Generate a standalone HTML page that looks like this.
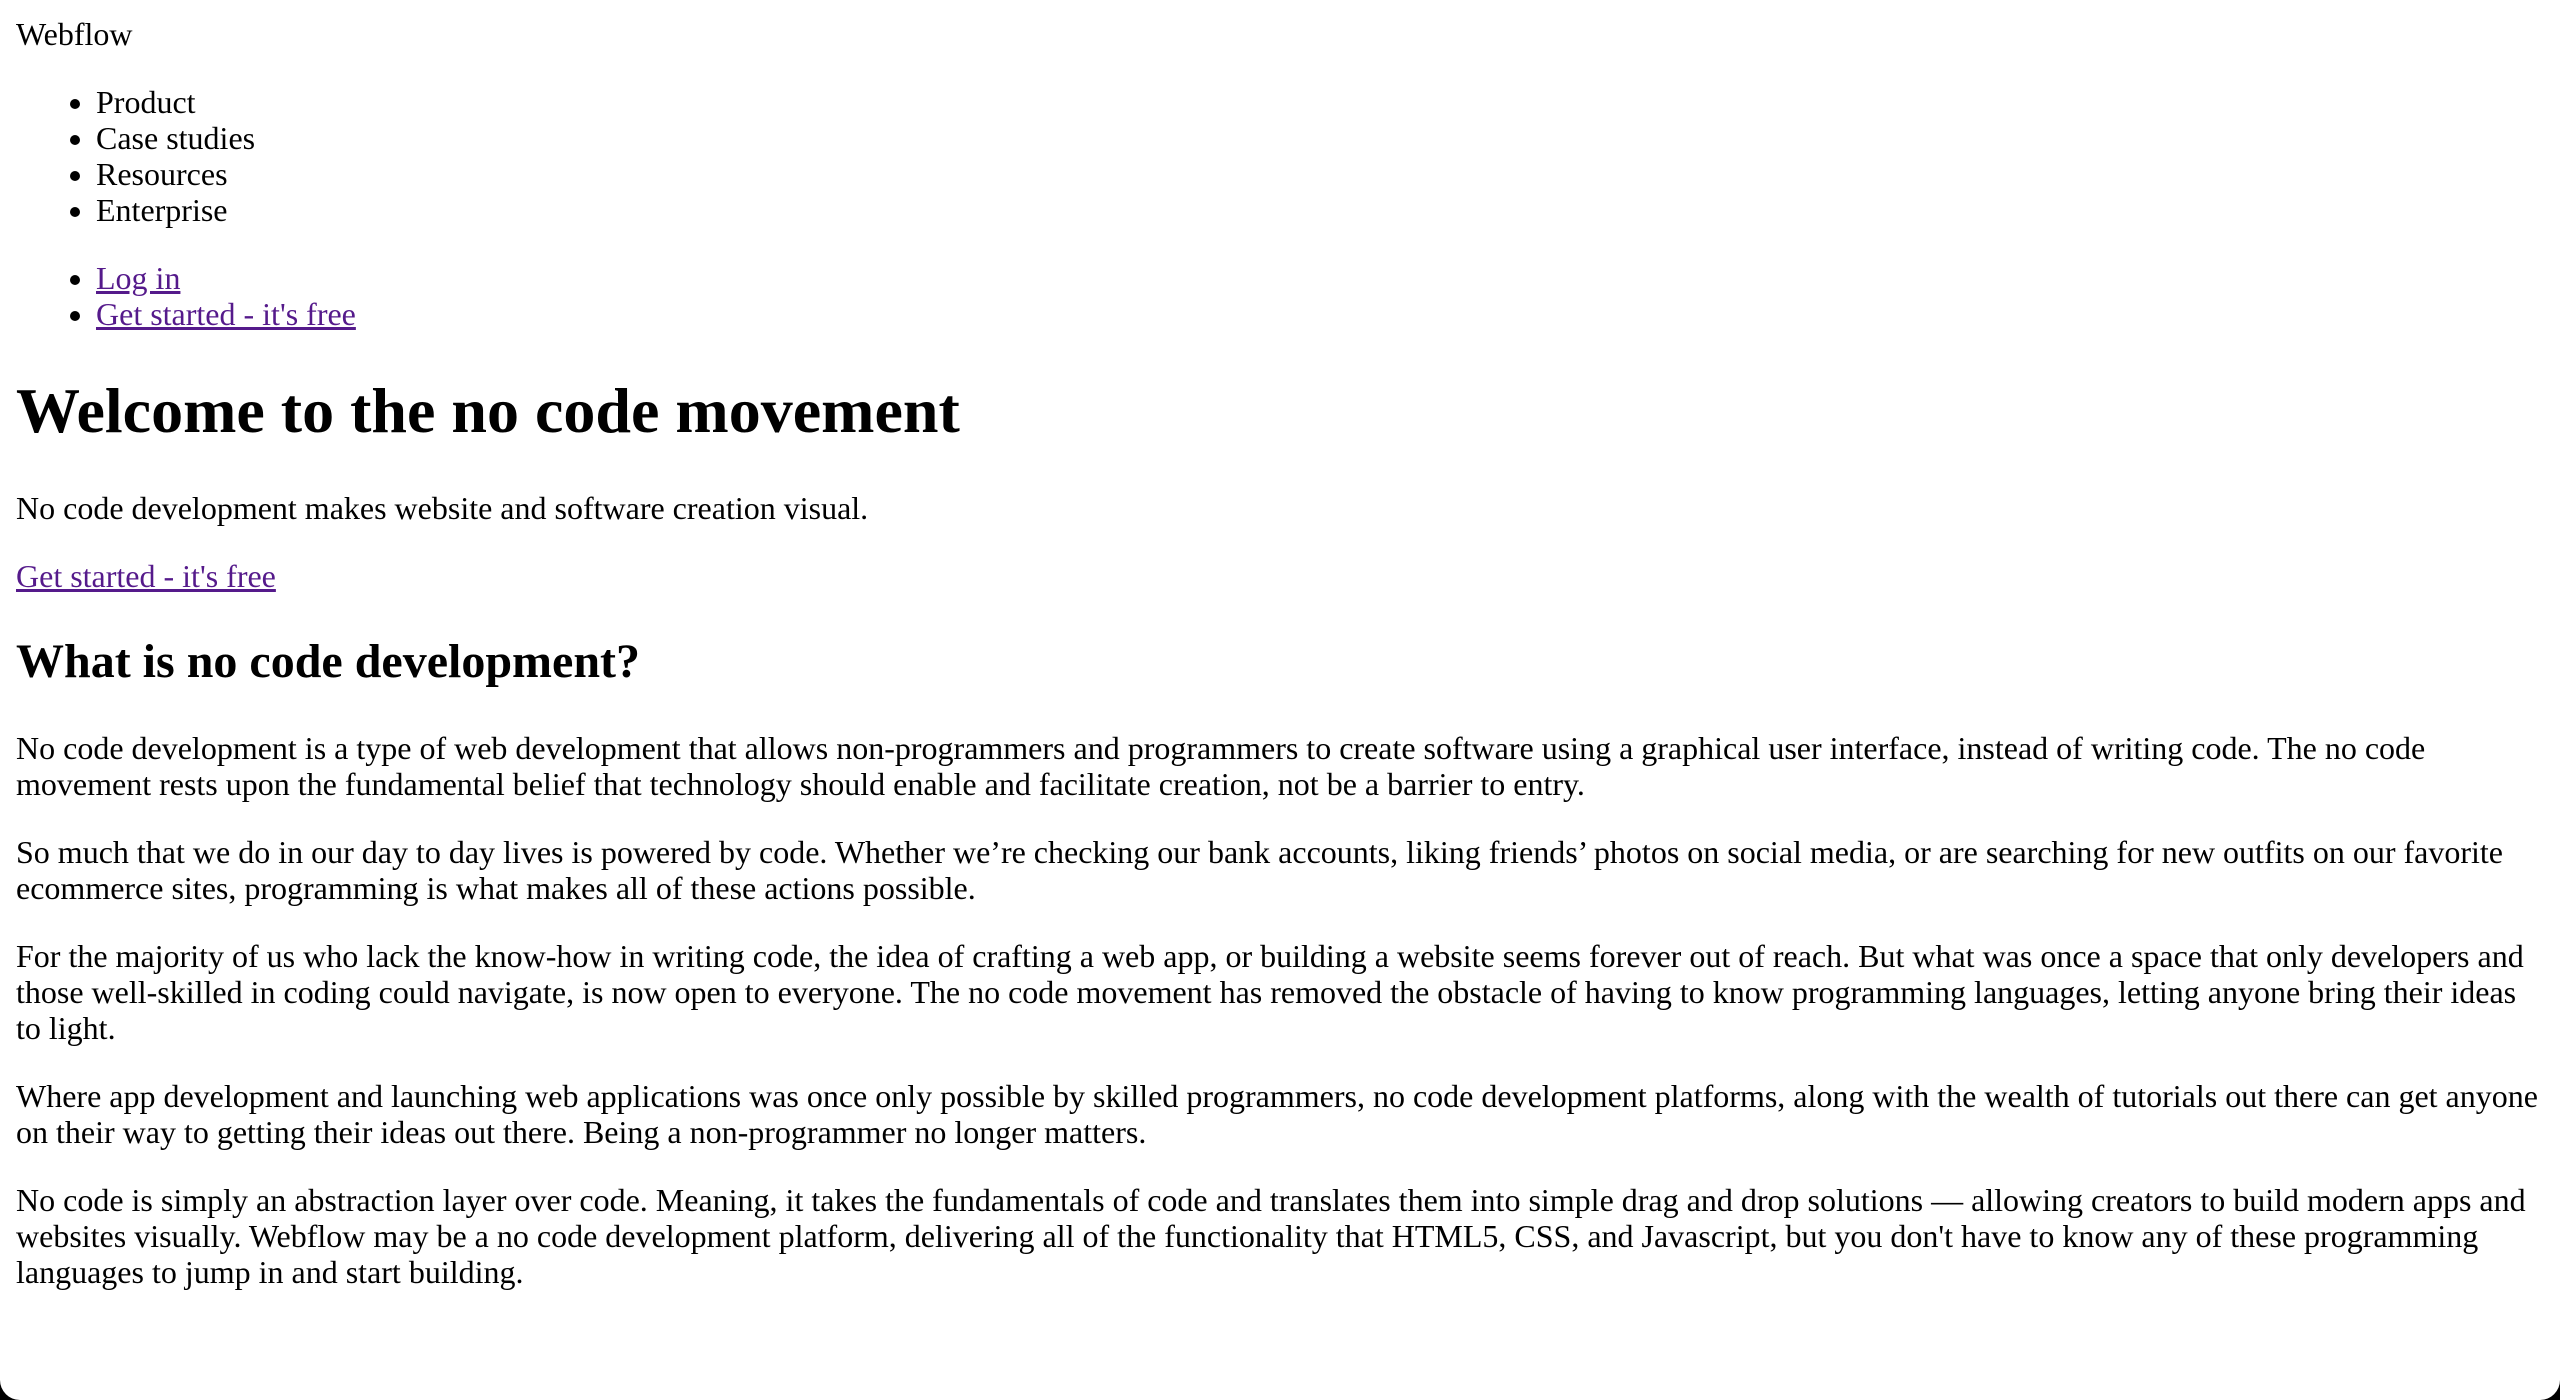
<!DOCTYPE html>
<html>
<head>
<meta charset="utf-8">
<style>
html{zoom:2;background:#000;}
body{margin:0;background:#000;}
.page{background:#fff;border-radius:0 0 10px 10px;height:700px;overflow:hidden;padding:8px;box-sizing:border-box;font-family:"Liberation Serif",serif;font-size:16px;line-height:18px;color:#000;}
a{color:#551a8b;}
ul{margin:16px 0;padding-left:40px;}
h1{font-size:32px;line-height:37px;margin:21px 0;}
h2{font-size:24px;line-height:28px;margin:20px 0;}
p{margin:16px 0;}
</style>
</head>
<body>
<div class="page">
<div>Webflow</div>
<ul><li>Product</li><li>Case studies</li><li>Resources</li><li>Enterprise</li></ul>
<ul><li><a href="#">Log in</a></li><li><a href="#">Get started - it's free</a></li></ul>
<h1>Welcome to the no code movement</h1>
<p>No code development makes website and software creation visual.</p>
<a href="#">Get started - it's free</a>
<h2>What is no code development?</h2>
<p>No code development is a type of web development that allows non-programmers and programmers to create software using a graphical user interface, instead of writing code. The no code movement rests upon the fundamental belief that technology should enable and facilitate creation, not be a barrier to entry.</p>
<p>So much that we do in our day to day lives is powered by code. Whether we’re checking our bank accounts, liking friends’ photos on social media, or are searching for new outfits on our favorite ecommerce sites, programming is what makes all of these actions possible.</p>
<p>For the majority of us who lack the know-how in writing code, the idea of crafting a web app, or building a website seems forever out of reach. But what was once a space that only developers and those well-skilled in coding could navigate, is now open to everyone. The no code movement has removed the obstacle of having to know programming languages, letting anyone bring their ideas to light.</p>
<p>Where app development and launching web applications was once only possible by skilled programmers, no code development platforms, along with the wealth of tutorials out there can get anyone on their way to getting their ideas out there. Being a non-programmer no longer matters.</p>
<p>No code is simply an abstraction layer over code. Meaning, it takes the fundamentals of code and translates them into simple drag and drop solutions — allowing creators to build modern apps and websites visually. Webflow may be a no code development platform, delivering all of the functionality that HTML5, CSS, and Javascript, but you don't have to know any of these programming languages to jump in and start building.</p>
</div>
</body>
</html>
